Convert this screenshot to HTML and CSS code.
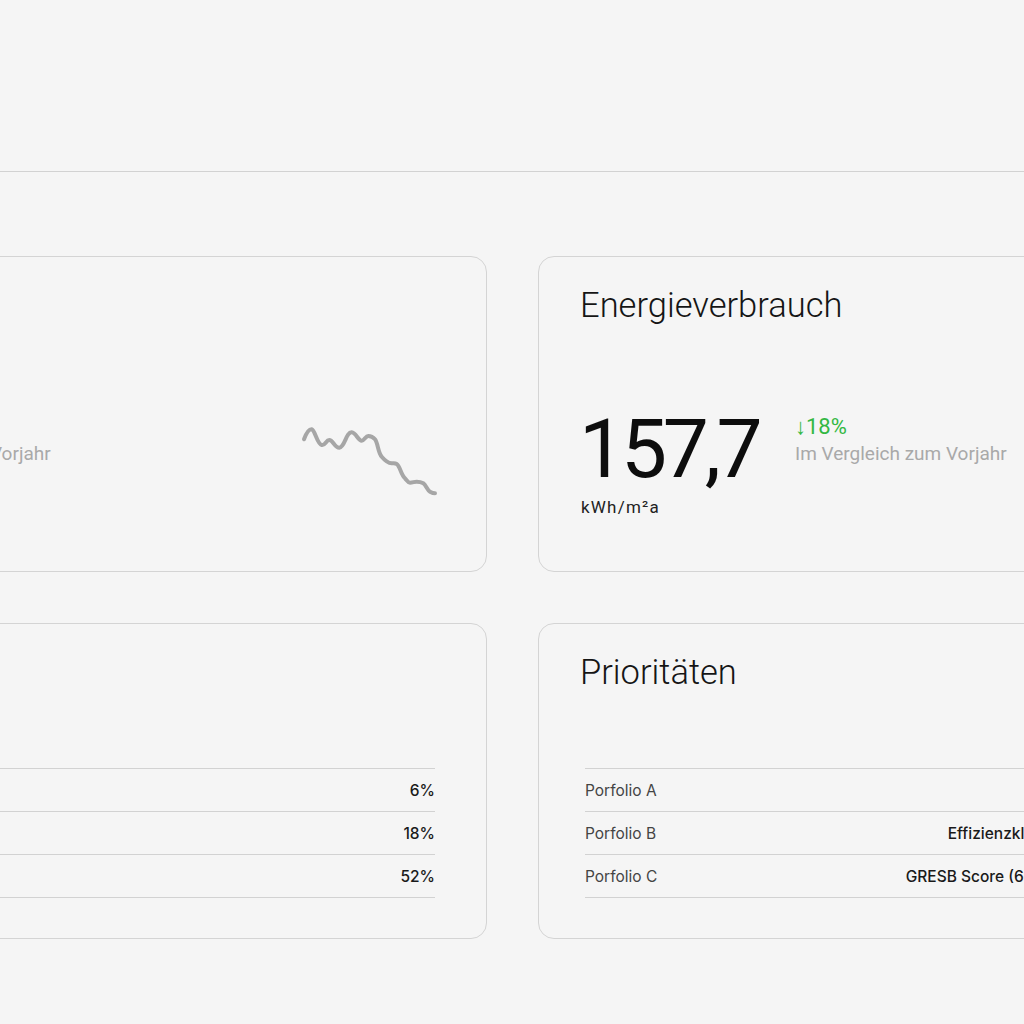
FILE: index.html
```html
<!DOCTYPE html>
<html lang="de">
<head>
  <meta charset="UTF-8">
  <title>Portfolio Dashboard</title>
  <meta name="viewport" content="width=device-width, initial-scale=1.0">
  <link rel="stylesheet" href="styles.css">
</head>
<body>

<header class="topbar"></header>

<main class="dashboard">

  <!-- CO2 card -->
  <section class="card">
    <h2 class="card-title">CO₂-Emissionen</h2>
    <div class="stat-row">
      <div class="stat-main">
        <div class="stat-value">34,2</div>
        <div class="stat-unit">kgCO₂/m²a</div>
      </div>
      <div class="stat-change">
        <div class="change-value">↓12%</div>
        <div class="change-label">Im Vergleich zum Vorjahr</div>
      </div>
      <svg class="sparkline" width="140" height="72" viewBox="0 0 140 72">
        <path d="M4 14.3 C6 9 9 4 11.7 4.3 C15 5 17 19 21.7 20 C25 21 26 15 29.3 15 C33 15 35 23 39.3 22.7 C45 22 46 7 51.7 7.3 C56 7.5 58 15.7 61.7 15.7 C64.5 15.7 65.5 11 68.3 11 C71 11 73 12 75 14.3 C78 18 78 28 81.7 31.7 C84.5 35 88 38 91.7 38.3 C94 38.5 95 38 96.7 39 C100 41 101 50 105 53.3 C107 55.5 108 57.7 110 57.7 C113 57.7 114 56.7 116.7 56.7 C119.5 56.7 121 57 123.3 58.3 C126 60 127 65 130 66.7 C132 67.8 133.5 68.3 135 68.3" />
      </svg>
    </div>
  </section>

  <!-- Energy card -->
  <section class="card">
    <h2 class="card-title">Energieverbrauch</h2>
    <div class="stat-row">
      <div class="stat-main">
        <div class="stat-value">157,7</div>
        <div class="stat-unit">kWh/m²a</div>
      </div>
      <div class="stat-change">
        <div class="change-value">↓18%</div>
        <div class="change-label">Im Vergleich zum Vorjahr</div>
      </div>
      <svg class="sparkline" width="140" height="72" viewBox="0 0 140 72">
        <path d="M4 14.3 C6 9 9 4 11.7 4.3 C15 5 17 19 21.7 20 C25 21 26 15 29.3 15 C33 15 35 23 39.3 22.7 C45 22 46 7 51.7 7.3 C56 7.5 58 15.7 61.7 15.7 C64.5 15.7 65.5 11 68.3 11 C71 11 73 12 75 14.3 C78 18 78 28 81.7 31.7 C84.5 35 88 38 91.7 38.3 C94 38.5 95 38 96.7 39 C100 41 101 50 105 53.3 C107 55.5 108 57.7 110 57.7 C113 57.7 114 56.7 116.7 56.7 C119.5 56.7 121 57 123.3 58.3 C126 60 127 65 130 66.7 C132 67.8 133.5 68.3 135 68.3" />
      </svg>
    </div>
  </section>

  <!-- Share card -->
  <section class="card">
    <h2 class="card-title">Anteil Portfolio</h2>
    <table class="data-table">
      <tr><td>Porfolio A</td><td class="num">6%</td></tr>
      <tr><td>Porfolio B</td><td class="num">18%</td></tr>
      <tr><td>Porfolio C</td><td class="num">52%</td></tr>
    </table>
  </section>

  <!-- Priorities card -->
  <section class="card">
    <h2 class="card-title">Prioritäten</h2>
    <table class="data-table">
      <tr><td>Porfolio A</td><td class="num">–</td><td class="goal">2030</td></tr>
      <tr><td>Porfolio B</td><td class="num">Effizienzklasse</td><td class="goal">2027</td></tr>
      <tr><td>Porfolio C</td><td class="num">GRESB Score (60 %)</td><td class="goal">2026</td></tr>
    </table>
  </section>

</main>

</body>
</html>
```

FILE: styles.css
```css
/* Global styles */
html, body {
  overflow: hidden;
}

body {
  font-family: Inter, 'Liberation Sans', sans-serif;
  margin: 0;
  padding: 0;
  background: #f5f5f5;
  color: #222;
}

.topbar {
  height: 171px;
  border-bottom: 1px solid #d2d2d2;
}

/* Cards grid */
.dashboard {
  display: grid;
  grid-template-columns: 905px 905px;
  grid-auto-rows: 316px;
  gap: 51px;
  width: 1861px;
  margin: 84px 0 0 calc(50% - 930px);
}

.card {
  box-sizing: border-box;
  border: 1px solid #d4d4d4;
  border-radius: 16px;
  padding: 28px 46px 0 40px;
}

.card-title {
  margin: 0 0 0 1px;
  font-family: Roboto, sans-serif;
  font-weight: 300;
  font-size: 34.5px;
  line-height: 40px;
  color: #151515;
}

/* Stat cards */
.stat-row {
  display: flex;
  align-items: flex-start;
  margin-top: 83px;
}

.stat-main {
  width: 182px;
}

.stat-value {
  font-family: Roboto, sans-serif;
  font-size: 82px;
  line-height: 82px;
  letter-spacing: -4.2px;
  color: #0d0d0d;
}

.stat-unit {
  margin-top: 7px;
  padding-left: 2px;
  font-family: Roboto, sans-serif;
  font-size: 17px;
  line-height: 20px;
  letter-spacing: 1.2px;
  color: #222;
}

.stat-change {
  margin-left: 34px;
  padding-top: 6px;
}

.change-value {
  font-family: Roboto, sans-serif;
  font-size: 22px;
  line-height: 26px;
  color: #33b843;
}

.change-label {
  margin-top: 3px;
  font-family: Roboto, sans-serif;
  font-size: 19px;
  line-height: 22px;
  color: #a9a9a9;
}

.sparkline {
  margin: 17px 0 0 auto;
}

.sparkline path {
  fill: none;
  stroke: #a6a6a6;
  stroke-width: 4;
  stroke-linecap: round;
  stroke-linejoin: round;
}

/* Tables */
.data-table {
  width: calc(100% - 11px);
  margin: 76px 5px 0 6px;
  border-collapse: collapse;
  font-size: 15.5px;
}

.data-table tr {
  border-top: 1px solid #d2d2d2;
  border-bottom: 1px solid #d2d2d2;
}

.data-table td {
  height: 42px;
  padding: 0;
  color: #444;
}

.data-table .num {
  text-align: right;
  font-weight: 450;
  color: #1a1a1a;
}

.data-table .goal {
  width: 332px;
  text-align: right;
  font-weight: 450;
  color: #1a1a1a;
}
```
